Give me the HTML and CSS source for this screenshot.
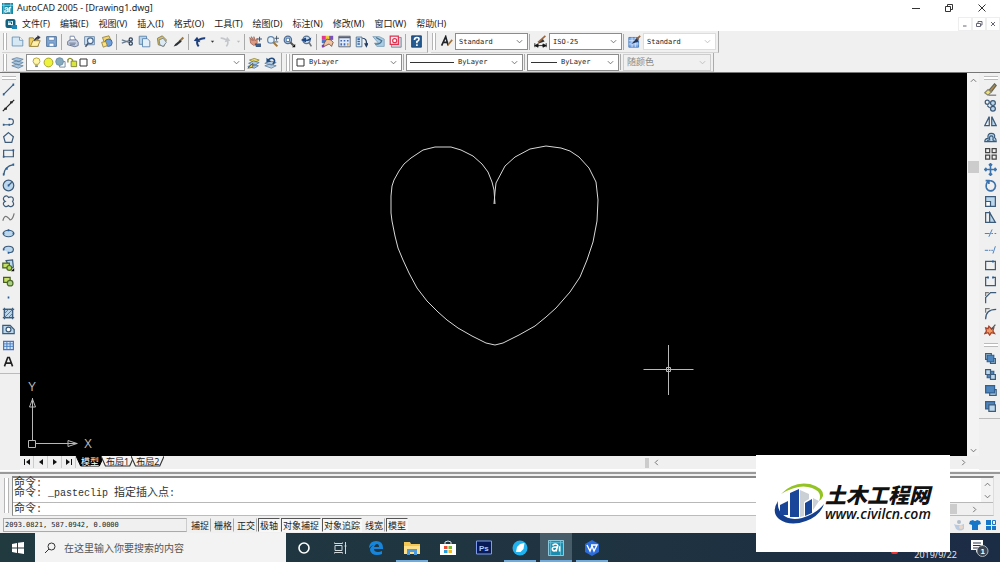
FILE: index.html
```
<!DOCTYPE html>
<html lang="zh-CN">
<head>
<meta charset="utf-8">
<title>AutoCAD 2005 - [Drawing1.dwg]</title>
<link rel="stylesheet" href="styles.css">
</head>
<body>
<div class="app">
  <header class="titlebar">
    <svg class="appicon" viewBox="0 0 12 12"><rect width="12" height="12" fill="#1289a7"/><path d="M0 2.500h12M9.500 0v12M2 0v12" stroke="#9ed8e6" stroke-width=".8"/><path d="M3 6q2-2 3.500 0V10M6.500 7.500Q3 7 3 9t3.500 0M8 10V5h2" stroke="#fff" fill="none" stroke-width="1.200"/></svg>
    <h1 class="title">AutoCAD 2005 - [Drawing1.dwg]</h1>
    <div class="winbtns">
      <button aria-label="最小化"><svg viewBox="0 0 10 10"><path d="M1 5.500h8"/></svg></button>
      <button aria-label="还原"><svg viewBox="0 0 10 10"><path d="M1.500 3.500h5v5h-5zM3.500 3.500v-2h5v5h-2"/></svg></button>
      <button aria-label="关闭"><svg viewBox="0 0 10 10"><path d="M1.500 1.500l7 7M8.500 1.500l-7 7"/></svg></button>
    </div>
  </header>
  <nav class="menubar">
    <svg class="docicon" viewBox="0 0 12 12"><rect x=".5" y="1" width="10" height="9" rx="2" fill="#14617f"/><path d="M3 3h5v4H3z" fill="#d9f1f8"/><path d="M3.500 4h3v2" stroke="#14617f" fill="none"/><path d="M6 7h6v4H7z" fill="#1c86b8"/></svg>
    <button>文件(F)</button><button>编辑(E)</button><button>视图(V)</button><button>插入(I)</button><button>格式(O)</button><button>工具(T)</button><button>绘图(D)</button><button>标注(N)</button><button>修改(M)</button><button>窗口(W)</button><button>帮助(H)</button>
    <div class="docbtns">
      <button aria-label="最小化文档"><svg viewBox="0 0 8 8"><path d="M2 6h3.500"/></svg></button>
      <button aria-label="还原文档"><svg viewBox="0 0 8 8"><path d="M1.500 3.500h4v3h-4zM3 3V1.500h4V5H6"/></svg></button>
      <button aria-label="关闭文档"><svg viewBox="0 0 8 8"><path d="M2 2l4 4M6 2L2 6"/></svg></button>
    </div>
  </nav>

  <div class="toolrow">
    <div class="toolbar">
      <i class="grip"></i>
      <button class="tb" aria-label="新建"><svg viewBox="0 0 16 16"><path d="M1.500 2.500h9l4 4v7h-13z" fill="#d7e8f5" stroke="#5f8bb0"/><path d="M10.500 2.500v4h4" fill="#fff" stroke="#5f8bb0"/></svg></button>
      <button class="tb" aria-label="打开"><svg viewBox="0 0 16 16"><path d="M1.500 14V3.500h5l1 2h5V14z" fill="#f1cf67" stroke="#8f7a35"/><path d="M3 14l3-7h9l-3 7z" fill="#fff0a8" stroke="#8f7a35"/><path d="M8 7q1-5 5-4M12 1l3 2-3 2z" fill="#334" stroke="#334"/></svg></button>
      <button class="tb" aria-label="保存"><svg viewBox="0 0 16 16"><path d="M2 2h12v12H2z" fill="#7fa8d5" stroke="#3b628f"/><path d="M4.500 2.500h7v4h-7zM5 10h6v4H5z" fill="#fff" stroke="#5c83b0"/></svg></button>
      <i class="sep"></i>
      <button class="tb" aria-label="打印"><svg viewBox="0 0 16 16"><path d="M5 7V1.500h5L12 7" fill="#fff" stroke="#66799a"/><path d="M2 8l3-2h8l2 3v4l-4 1.500L2 12z" fill="#c4cfdf" stroke="#59698a"/><path d="M4 10h8M5 12h6" stroke="#59698a"/></svg></button>
      <button class="tb" aria-label="打印预览"><svg viewBox="0 0 16 16"><path d="M2 2h12v10H2z" fill="#cfe1f0" stroke="#5f7f9f"/><circle cx="9" cy="7" r="3.500" fill="#eef7ff" stroke="#4a6b94" stroke-width="1.500"/><path d="M6.500 10L3 14.500" stroke="#4a5568" stroke-width="2"/></svg></button>
      <button class="tb" aria-label="发布"><svg viewBox="0 0 16 16"><path d="M3 3l8-2 3 7-8 3z" fill="#f4d66c" stroke="#8f7a35"/><circle cx="10.500" cy="9.500" r="4.500" fill="#6f9fd8" stroke="#365f9a"/><path d="M2 9l5-1 2 5-5 2z" fill="#ffe27c" stroke="#8f7a35"/></svg></button>
      <i class="sep"></i>
      <button class="tb" aria-label="剪切"><svg viewBox="0 0 16 16"><path d="M1 6l9 3M1 10l9-3" stroke="#6b7b8e" stroke-width="1.500"/><circle cx="12" cy="5.500" r="2" fill="none" stroke="#29405c" stroke-width="1.500"/><circle cx="12" cy="10.500" r="2" fill="none" stroke="#29405c" stroke-width="1.500"/></svg></button>
      <button class="tb" aria-label="复制"><svg viewBox="0 0 16 16"><path d="M1.500 1.500h9v10h-9z" fill="#b9d3ea" stroke="#4d7ba6"/><path d="M5.500 4.500h6l3 3v7h-9z" fill="#e3f0fa" stroke="#4d7ba6"/></svg></button>
      <button class="tb" aria-label="粘贴"><svg viewBox="0 0 16 16"><path d="M3 4l6-3 5 5-3 8-7-2z" fill="#d6c16b" stroke="#7a7350"/><path d="M5 6l5-2 4 5-4 5-4-2z" fill="#dce8f2" stroke="#6b7c8b"/></svg></button>
      <button class="tb" aria-label="特性匹配"><svg viewBox="0 0 16 16"><path d="M9 8l5-5" stroke="#a07a3c" stroke-width="2.500"/><path d="M10 6L4 11l-2 3 4-1 6-5z" fill="#2b3038"/></svg></button>
      <i class="sep"></i>
      <button class="tb" aria-label="放弃"><svg viewBox="0 0 16 16"><path d="M7 14Q3 9 7 6q4-2.500 8-2" fill="none" stroke="#1d3e7c" stroke-width="2.500"/><path d="M1 7l4-5 4 7z" fill="#1d3e7c"/></svg></button>
      <button class="drop" aria-label="放弃列表"><svg viewBox="0 0 6 6"><path d="M1 2h4L3 4.500z"/></svg></button>
      <button class="tb" aria-label="重做"><svg viewBox="0 0 16 16"><path d="M9 14q4-5 0-8-4-2.500-7-2" fill="none" stroke="#c3c6cb" stroke-width="2"/><path d="M14 7l-4-5-3 7z" fill="#c3c6cb"/></svg></button>
      <button class="drop off" aria-label="重做列表"><svg viewBox="0 0 6 6"><path d="M1 2h4L3 4.500z"/></svg></button>
      <i class="sep"></i>
      <button class="tb" aria-label="实时平移"><svg viewBox="0 0 16 16"><path d="M1 3l3 4-1-5 3 5V2l2 5 2-3v6l-4 3-4-3z" fill="#df9a83" stroke="#8f5648" stroke-width=".8"/><path d="M8 11h6v3H9zM13 2v6M10 5h6" fill="#44638f" stroke="#39547e" stroke-width="1.300"/></svg></button>
      <button class="tb" aria-label="实时缩放"><svg viewBox="0 0 16 16"><circle cx="6" cy="6" r="4" fill="#e5f1fb" stroke="#6386ac" stroke-width="1.500"/><path d="M9 9l5 5" stroke="#a47a3a" stroke-width="2.500"/><path d="M13 1v6M10.500 4H16M10.500 8.500H15" stroke="#345"/></svg></button>
      <button class="tb" aria-label="窗口缩放"><svg viewBox="0 0 16 16"><circle cx="6" cy="6" r="4.500" fill="#aac8e6" stroke="#526b92" stroke-width="1.500"/><path d="M4 4h4v4H4z" fill="#fff" stroke="#369"/><path d="M9 9l4 4" stroke="#555" stroke-width="2.500"/><path d="M15 11v4h-4z" fill="#111"/></svg></button>
      <button class="tb" aria-label="缩放上一个"><svg viewBox="0 0 16 16"><circle cx="8" cy="6" r="4.500" fill="#c8ddef" stroke="#5b7592" stroke-width="1.500"/><path d="M11 9l3 5" stroke="#6c7178" stroke-width="2"/><path d="M1 6l6-3 1 3 6-3-1 3q-3 2-5 1L7 9z" fill="#1c4584"/></svg></button>
      <i class="sep"></i>
      <button class="tb" aria-label="特性"><svg viewBox="0 0 16 16"><path d="M1 1h5v5H1z" fill="#e1388f"/><path d="M6 1h4v5H6z" fill="#f1ca37"/><path d="M10 1h5v5h-5z" fill="#7952b8"/><path d="M1 6h5v4H1z" fill="#4b79c9"/><path d="M7 5l5 1 3 3-2 5-3-3-4 2-4 2 2-5z" fill="#f2c3a0" stroke="#65463f"/><path d="M1 12h3v3H1z" fill="#7d3cb0"/></svg></button>
      <button class="tb" aria-label="设计中心"><svg viewBox="0 0 16 16"><path d="M1 1.500h14v13H1z" fill="#dfeafb" stroke="#4b5260"/><path d="M1 2h14v2H1z" fill="#596273"/><path d="M3 6h2v2H3zM7 6h2v2H7zM11 6h2v2h-2zM3 10h2v3H3zM7 10h2v3H7z" fill="#3e68b7"/><path d="M11 10h2v3h-2z" fill="#db963d"/></svg></button>
      <button class="tb" aria-label="工具选项板"><svg viewBox="0 0 16 16"><path d="M1.500 2.500h7v12h-7z" fill="#dcebf8" stroke="#406288"/><path d="M3 5h3M3 8h3M3 11h3" stroke="#2a65b8" stroke-width="2"/><path d="M9 4q6 0 5 8M12 10l2 4 2-4" fill="none" stroke="#263f62" stroke-width="1.500"/></svg></button>
      <button class="tb" aria-label="图纸集管理器"><svg viewBox="0 0 16 16"><path d="M1 2h8l6 3v9H6l-3-4h5z" fill="#a9cde4" stroke="#7b9eb6"/><path d="M4 11q6 1 8-4l-7-4" fill="none" stroke="#49738e" stroke-width="1.500"/></svg></button>
      <button class="tb" aria-label="标记集管理器"><svg viewBox="0 0 16 16"><path d="M3 3h12v12H3z" fill="#ced4de" stroke="#717b8d"/><path d="M1.500 1.500h10v10h-10z" fill="#fff1f1" stroke="#dc3350" stroke-width="1.500"/><circle cx="7" cy="7" r="2.500" fill="#fff" stroke="#dc3350" stroke-width="1.500"/></svg></button>
      <i class="sep"></i>
      <button class="tb" aria-label="帮助"><svg viewBox="0 0 16 16"><path d="M2 1h12v14H2z" fill="#245b93" stroke="#16385f"/><path d="M5.500 6q0-3 3-3 3 0 2.500 2.500Q11 7 8.500 8v2M8.500 11.500v2" fill="none" stroke="#fff" stroke-width="2"/></svg></button>
    </div>
    <div class="toolbar">
      <i class="grip"></i>
      <button class="tb" aria-label="文字样式"><svg viewBox="0 0 16 16"><path d="M2 13L7 2l3 11M4 9h6" fill="none" stroke="#20242b" stroke-width="2"/><path d="M10 12l5-6" stroke="#a2733a" stroke-width="2"/></svg></button>
      <label class="combo w73"><select aria-label="文字样式"><option>Standard</option></select><svg class="chev" viewBox="0 0 8 8"><path d="M1 2.500l3 3 3-3"/></svg></label>
      <i class="sep"></i>
      <button class="tb" aria-label="标注样式"><svg viewBox="0 0 16 16"><path d="M1 13h14M1 10v5M15 10v5M1 13l4-2v4zM15 13l-4-2v4z" fill="#111" stroke="#111"/><path d="M5 9l9-8" stroke="#9a643a" stroke-width="2"/><path d="M4 11l7-6 2 3z" fill="#333"/></svg></button>
      <label class="combo w73"><select aria-label="标注样式"><option>ISO-25</option></select><svg class="chev" viewBox="0 0 8 8"><path d="M1 2.500l3 3 3-3"/></svg></label>
      <i class="sep"></i>
      <button class="tb" aria-label="表格样式"><svg viewBox="0 0 16 16"><path d="M1 3h12v12H1z" fill="#83afea" stroke="#3e71b4"/><path d="M1 7h12M1 11h12M5 3v12M9 3v12" stroke="#d9e8fc"/><path d="M9 7l6-6" stroke="#9a643a" stroke-width="2"/><path d="M4 11l7-7 2 4z" fill="#253553"/></svg></button>
      <label class="combo w73 faint"><select aria-label="表格样式"><option>Standard</option></select><svg class="chev" viewBox="0 0 8 8"><path d="M1 2.500l3 3 3-3"/></svg></label>
    </div>
  </div>

  <div class="toolrow second">
    <div class="toolbar">
      <i class="grip"></i>
      <button class="tb" aria-label="图层特性管理器"><svg viewBox="0 0 16 16"><path d="M1 4l6-2 8 2-6 3zM1 8l6-2 8 2-6 3zM1 12l6-2 8 2-6 3z" fill="#a9c6df" stroke="#64829f"/></svg></button>
      <label class="combo layer">
        <svg class="li" viewBox="0 0 12 12"><path d="M4 8Q1 5 3 2q3-2 6 0 2 3-1 6z" fill="#fff6a8" stroke="#b0a136"/><path d="M4.500 9h3v2h-3z" fill="#77838e"/></svg>
        <svg class="li" viewBox="0 0 12 12"><circle cx="6" cy="6" r="4.800" fill="#edf23b" stroke="#a09b2e"/></svg>
        <svg class="li" viewBox="0 0 12 12"><path d="M5 5h6v6H5z" fill="#fff" stroke="#70869a"/><circle cx="5" cy="5" r="4.200" fill="#86a9bd" stroke="#6c91a7"/></svg>
        <svg class="li" viewBox="0 0 12 12"><path d="M1 6V3q2-3 5 0v3" fill="none" stroke="#8d912b" stroke-width="1.500"/><path d="M4.500 4.500h6v6h-6z" fill="#d9e640" stroke="#7b8430"/></svg>
        <svg class="li sq" viewBox="0 0 9 9"><path d="M1 1h7v7H1z" fill="#fff" stroke="#333"/></svg>
        <select aria-label="图层"><option>0</option></select><svg class="chev" viewBox="0 0 8 8"><path d="M1 2.500l3 3 3-3"/></svg></label>
      <button class="tb" aria-label="置为当前"><svg viewBox="0 0 16 16"><path d="M3 5l6-2 6 2-6 3z" fill="#f0dc65" stroke="#8b8132"/><path d="M2 9l6-3 7 2-6 4zM1 13l6-3 7 2-5 3z" fill="#acc7de" stroke="#50759a"/><path d="M1 15l6-6v5z" fill="#e5d137" stroke="#555"/></svg></button>
      <button class="tb" aria-label="上一个图层"><svg viewBox="0 0 16 16"><path d="M1 9l6-3 8 2-6 3zM1 12l6-2 8 2-6 3z" fill="#b6cde1" stroke="#5f7f9e"/><path d="M11 10q4-5 0-7-3-1-6 2" fill="none" stroke="#214c82" stroke-width="2"/><path d="M3 8V2l6 5z" fill="#214c82"/></svg></button>
    </div>
    <div class="toolbar">
      <i class="grip"></i>
      <label class="combo color"><svg class="li sq" viewBox="0 0 9 9"><path d="M1 1h7v7H1z" fill="#fff" stroke="#333"/></svg><select aria-label="颜色"><option>ByLayer</option></select><svg class="chev" viewBox="0 0 8 8"><path d="M1 2.500l3 3 3-3"/></svg></label>
      <i class="sep"></i>
      <label class="combo ltype"><i class="line long"></i><select aria-label="线型"><option>ByLayer</option></select><svg class="chev" viewBox="0 0 8 8"><path d="M1 2.500l3 3 3-3"/></svg></label>
      <i class="sep"></i>
      <label class="combo lweight"><i class="line"></i><select aria-label="线宽"><option>ByLayer</option></select><svg class="chev" viewBox="0 0 8 8"><path d="M1 2.500l3 3 3-3"/></svg></label>
      <i class="sep"></i>
      <label class="combo plot disabled"><select aria-label="打印样式" disabled><option>随颜色</option></select><svg class="chev" viewBox="0 0 8 8"><path d="M1 2.500l3 3 3-3"/></svg></label>
    </div>
  </div>

  <main class="work">
    <aside class="side left">
      <i class="hgrip"></i>
      <button aria-label="直线"><svg viewBox="0 0 16 16"><path d="M2 14L14 2"/><path class="d" d="M1 14h2M13 2h2"/></svg></button>
      <button aria-label="构造线"><svg viewBox="0 0 16 16"><path d="M1 15L15 1" style="stroke:#222"/><path class="d" d="M3 12h3M10 4h3" style="stroke:#222"/></svg></button>
      <button aria-label="多段线"><svg viewBox="0 0 16 16"><path d="M2 12h8q4 0 4-4t-5-3"/><path class="d" d="M1 12h2M8 12h2M8 5h2"/></svg></button>
      <button aria-label="正多边形"><svg viewBox="0 0 16 16"><path d="M8 2l6 5-2 7H4L2 7z"/></svg></button>
      <button aria-label="矩形"><svg viewBox="0 0 16 16"><path d="M2 4h12v8H2z"/><path class="d" d="M1 12h2M13 4h2"/></svg></button>
      <button aria-label="圆弧"><svg viewBox="0 0 16 16"><path d="M2 15Q3 4 14 2"/><path class="d" d="M1 14h2M5 7h2M13 2h2"/></svg></button>
      <button aria-label="圆"><svg viewBox="0 0 16 16"><circle cx="8" cy="8" r="6.500" class="f"/><path d="M8 8l4-4"/><path class="d" d="M7 8h2"/></svg></button>
      <button aria-label="修订云线"><svg viewBox="0 0 16 16"><path d="M4 8Q0 5 3 2q3-2 5 1 5-2 6 2 0 2-1 3 3 4-1 6-3 1-4-1-4 3-6-1-1-3 2-4z"/></svg></button>
      <button aria-label="样条曲线"><svg viewBox="0 0 16 16"><path class="g" d="M1 12Q3 5 6 7t4 4q3 0 5-8"/></svg></button>
      <button aria-label="椭圆"><svg viewBox="0 0 16 16"><ellipse cx="8" cy="8" rx="6.500" ry="4" class="f"/><path class="d" d="M1 8h2M13 8h2M7 4h2"/></svg></button>
      <button aria-label="椭圆弧"><svg viewBox="0 0 16 16"><path class="f" d="M2 8q0-4 6-4t6 4q0 4-6 4"/><path class="d" d="M1 8h2M7 12h2"/></svg></button>
      <button aria-label="插入块"><svg viewBox="0 0 16 16"><path d="M5 2l8-1 1 9-4 2z" class="f"/><path d="M1 5h8v6H1z" fill="#c5df68" stroke="#465f20"/><circle cx="9" cy="11" r="3" fill="#b1db54" stroke="#4c6928"/><path d="M15 11v4h-4z" fill="#111" stroke="none"/></svg></button>
      <button aria-label="创建块"><svg viewBox="0 0 16 16"><path d="M2 3h8v6H2z" fill="#c5df68" stroke="#465f20"/><circle cx="10" cy="10" r="3.500" fill="#a9cf82" stroke="#4c6928"/></svg></button>
      <button aria-label="点"><svg viewBox="0 0 16 16"><path class="d" d="M7 8h2"/></svg></button>
      <button aria-label="图案填充"><svg viewBox="0 0 16 16"><path class="f" d="M3 3h10v10H3z"/><path d="M1 3h14M1 13h14M3 1v14M13 1v14"/><path class="b" d="M3 8l5-5M3 13L13 3M8 13l5-5"/></svg></button>
      <button aria-label="面域"><svg viewBox="0 0 16 16"><path class="f" d="M1 3h9l5 5v5H1z"/><circle cx="8" cy="8" r="3" fill="#fff"/></svg></button>
      <button aria-label="表格"><svg viewBox="0 0 16 16"><path d="M2 3h12v10H2z" fill="#d8e8ff" stroke="#4d73ba"/><path class="b" d="M2 6h12M2 9h12M6 3v10M10 3v10"/></svg></button>
      <button aria-label="多行文字"><svg viewBox="0 0 16 16"><path d="M3 14L7 3h2l4 11M5 10h6" style="stroke:#222;stroke-width:2"/></svg></button>
    </aside>

    <section class="center">
      <div class="view">
        <svg class="drawing" viewBox="0 -1 947 383" role="img" aria-label="绘图区">
          <path class="ent" d="M475 130L474 116 472 108 468 98 462 90 453 82 441 76 431 73 415 73 403 76 391 84 384 90 379 97 374 106 372 112 371 122 371 139 372 147 375 162 378 174 383 186 389 199 397 214 407 227 418 238 427 246 438 254 452 262 466 269 475 271 483 269 499 261 515 252 526 243 536 234 550 218 560 203 567 186 573 168 577 147 578 126 576 108 569 94 559 83 550 77 541 74 526 72 510 75 495 83 485 92 476 109 475 118 474 130"/>
          <path class="cross" d="M623.500 295.500h50M648.500 271v50M646.500 293.500h4v4h-4z"/>
          <path class="ucs" d="M8.500 366.500h7v7h-7zM12.500 366v-42M15.500 369.500h42M12.500 325l-3 8h6zM57 369.500l-9-3v6z"/>
          <text x="8" y="317" class="axis">Y</text>
          <text x="64" y="374" class="axis">X</text>
        </svg>
        <div class="vscroll"><svg class="chev" viewBox="0 0 8 8"><path d="M1 5.500l3-3 3 3"/></svg><i class="thumb"></i><svg class="chev end" viewBox="0 0 8 8"><path d="M1 2.500l3 3 3-3"/></svg></div>
      </div>
      <div class="tabs">
        <button class="nav" aria-label="第一个"><svg viewBox="0 0 8 8"><path d="M1 1h1v6H1zM7 1v6L3 4z"/></svg></button>
        <button class="nav" aria-label="上一个"><svg viewBox="0 0 8 8"><path d="M6 1v6L2 4z"/></svg></button>
        <button class="nav" aria-label="下一个"><svg viewBox="0 0 8 8"><path d="M2 1v6l4-3z"/></svg></button>
        <button class="nav" aria-label="最后一个"><svg viewBox="0 0 8 8"><path d="M6 1h1v6H6zM1 1v6l4-3z"/></svg></button>
        <button class="tab on"><svg viewBox="0 0 30 11" preserveAspectRatio="none"><path d="M0 0l5 10h20l5-10z"/></svg><span>模型</span></button>
        <button class="tab"><svg viewBox="0 0 30 11" preserveAspectRatio="none"><path d="M0 0l4 10h22l4-10"/></svg><span>布局1</span></button>
        <button class="tab"><svg viewBox="0 0 30 11" preserveAspectRatio="none"><path d="M0 0l4 10h22l4-10"/></svg><span>布局2</span></button>
        <div class="hscroll"><i class="split"></i><svg class="chev" viewBox="0 0 8 8"><path d="M5.500 1l-3 3 3 3"/></svg><svg class="chev end" viewBox="0 0 8 8"><path d="M2.500 1l3 3-3 3"/></svg></div>
      </div>
    </section>

    <aside class="side right">
      <i class="hgrip"></i>
      <button aria-label="删除"><svg viewBox="0 0 16 16"><path d="M6 9l7-8 2 2-6 8z" fill="#b98a4a" stroke="#665"/><path d="M1 12l4-4 4 3-4 4z" fill="#f0e27a" stroke="#887"/><path class="g" d="M6 15h9"/></svg></button>
      <button aria-label="复制对象"><svg viewBox="0 0 16 16"><circle cx="4" cy="4" r="2.500"/><circle cx="11" cy="5" r="3" class="f"/><path d="M4 8l3 3"/><circle cx="11" cy="12" r="3" class="f"/></svg></button>
      <button aria-label="镜像"><svg viewBox="0 0 16 16"><path d="M6.500 2v11H1z"/><path class="f" d="M9.500 2v11H15z"/></svg></button>
      <button aria-label="偏移"><svg viewBox="0 0 16 16"><path class="f" d="M1 13q0-4 4-4-1-6 4-6t4 5q2 1 2 5z"/><path d="M4 12q1-1 3-1-1-5 2-5t2 5l2 1"/></svg></button>
      <button aria-label="阵列"><svg viewBox="0 0 16 16"><path d="M2 2h5v5H2zM10 2h5v5h-5zM2 10h5v5H2zM10 10h5v5h-5z" style="stroke:#444"/></svg></button>
      <button aria-label="移动"><svg viewBox="0 0 16 16"><path class="m" d="M8 1v14M1 8h14"/><path class="m" d="M6 3l2-2 2 2M6 13l2 2 2-2M3 6L1 8l2 2M13 6l2 2-2 2"/></svg></button>
      <button aria-label="旋转"><svg viewBox="0 0 16 16"><path class="m" d="M4 4q5-4 9 1 3 5-2 9-6 2-8-3-1-4 1-7M2 2h4v4"/></svg></button>
      <button aria-label="缩放"><svg viewBox="0 0 16 16"><path class="f" d="M2 2h12v12H2z"/><path d="M2 8h6v6H2z" fill="#fff"/></svg></button>
      <button aria-label="拉伸"><svg viewBox="0 0 16 16"><path d="M2 2h5v12H2z"/><path class="f" d="M7 2l7 12H7z"/></svg></button>
      <button aria-label="修剪"><svg viewBox="0 0 16 16"><path class="b" d="M1 8h6M9 8h2M13 8h2M6 12l4-9"/></svg></button>
      <button aria-label="延伸"><svg viewBox="0 0 16 16"><path class="b" d="M1 9h4M6 9h2M9 9h2M11 13l3-9"/></svg></button>
      <button aria-label="打断于点"><svg viewBox="0 0 16 16"><path d="M2 3h12v10H2z"/><path class="d" d="M10 3h2"/></svg></button>
      <button aria-label="打断"><svg viewBox="0 0 16 16"><path d="M5 3H2v10h12V3h-3"/><path class="d" d="M4 3h2M10 3h2"/></svg></button>
      <button aria-label="倒角"><svg viewBox="0 0 16 16"><path d="M2 15V8l6-6h7"/><path class="g" d="M2 6V2h4"/></svg></button>
      <button aria-label="圆角"><svg viewBox="0 0 16 16"><path d="M2 15Q2 3 15 3"/><path class="g" d="M2 7V2h5"/></svg></button>
      <button aria-label="分解"><svg viewBox="0 0 16 16"><path d="M2 6l3 1 1-3 3 3 3-1-1 4 2 3-4-1-2 3-2-3-4 1 2-3z" fill="#ee9a60" stroke="#a5412c"/><path d="M9 8l5-6" style="stroke:#555"/></svg></button>
      <i class="hgrip again"></i>
      <button aria-label="前置"><svg viewBox="0 0 16 16"><path class="f" d="M2 2h7v7H2zM8 8h6v6H8z"/><path class="s" d="M4 4h8v8H4z"/></svg></button>
      <button aria-label="后置"><svg viewBox="0 0 16 16"><path class="s" d="M4 4h8v8H4z"/><path class="f" d="M2 2h6v6H2zM8 8h6v6H8z"/></svg></button>
      <button aria-label="置于对象之上"><svg viewBox="0 0 16 16"><path class="f" d="M7 7h8v7H7z"/><path class="s" d="M2 2h11v9H2z"/></svg></button>
      <button aria-label="置于对象之下"><svg viewBox="0 0 16 16"><path class="s" d="M2 2h11v9H2z"/><path class="f" d="M6 6h8v8H6z"/></svg></button>
    </aside>
  </main>

  <section class="command">
    <i class="grip"></i>
    <div class="cmdpanel">
      <div class="history">
        <div class="log"><p><span>命令</span>:</p><p><span>命令</span>: _pasteclip <span>指定插入点</span>:</p></div>
        <div class="logscroll"><svg class="chev" viewBox="0 0 8 8"><path d="M1 5.500l3-3 3 3"/></svg><svg class="chev" viewBox="0 0 8 8"><path d="M1 2.500l3 3 3-3"/></svg></div>
      </div>
      <div class="entry"><label for="cmd"><span>命令</span>:</label><input id="cmd" type="text"><div class="entryscroll"><i class="thumb"></i><svg class="chev" viewBox="0 0 8 8"><path d="M2.500 1l3 3-3 3"/></svg></div></div>
    </div>
  </section>

  <footer class="status">
    <output class="coords">2093.0821, 587.0942, 0.0000</output>
    <button>捕捉</button><button>栅格</button><button>正交</button><button class="on">极轴</button><button class="on">对象捕捉</button><button class="on">对象追踪</button><button>线宽</button><button class="on">模型</button>
    <div class="tray">
      <svg viewBox="0 0 12 12"><circle cx="6" cy="3" r="2" fill="#b2bfca"/><path d="M1 5q2 1 4 1h3l3-1v5q-4 3-8 0z" fill="#b8cbe0"/><circle cx="8" cy="8" r="2" fill="#ecd7c7"/></svg>
      <svg viewBox="0 0 12 12"><path d="M1 2l3-1q2 2 4 0l3 1 1 3-3 1v5H3V6L0 5z" fill="#1876c9"/></svg>
      <svg viewBox="0 0 12 12"><path d="M1 1h5v5H1zM1 7h5v4H1zM7 7h4v4H7z" fill="#1876c9"/><path d="M7.500 1.500h3v4h-3z" fill="none" stroke="#1876c9"/></svg>
    </div>
  </footer>

  <footer class="taskbar">
    <button class="start" aria-label="开始"><svg viewBox="0 0 12 12"><path d="M0 2l5-1v4.500H0zM6 .8L12 0v5.500H6zM0 6.500h5V11l-5-1zM6 6.500h6V12l-6-1z" fill="#fff"/></svg></button>
    <label class="search"><svg viewBox="0 0 12 12"><circle cx="7.500" cy="4.500" r="3.500"/><path d="M5 7l-4 4"/></svg><input type="search" placeholder="在这里输入你要搜索的内容" aria-label="搜索"></label>
    <div class="apps">
      <button aria-label="Cortana"><svg viewBox="0 0 16 16"><circle cx="8" cy="8" r="5" fill="none" stroke="#fff" stroke-width="1.600"/></svg></button>
      <button aria-label="任务视图"><svg viewBox="0 0 16 16" fill="none" stroke="#d2dade"><path d="M3 5.500h7v5H3zM2.500 2.500v1h8v-1M2.500 13.500v-1h8v1M13.500 2v12M12.500 6h2"/></svg></button>
      <button aria-label="Edge"><svg viewBox="0 0 16 16"><path d="M1 7Q2 1 8 1q7 0 7 7v1H6q0 3 4 3 2 0 4-1v3q-2 1-5 1-6 0-7-5 0-3 4-5-2 0-5 3zM6 7h5q0-3-2-3T6 7z" fill="#1686dc" fill-rule="evenodd"/></svg></button>
      <button class="run" aria-label="文件资源管理器"><svg viewBox="0 0 16 16"><path d="M0 2h6l1 2h9v10H0z" fill="#f4c653"/><path d="M0 6h16v8H0z" fill="#ffe08a"/><path d="M3 15V9h10v6h-3v-3H6v3z" fill="#4d9add"/></svg></button>
      <button aria-label="应用商店"><svg viewBox="0 0 16 16"><path d="M5 4V2q3-2 6 0v2" fill="none" stroke="#dce2e5"/><path d="M0 4h16v11H0z" fill="#fff"/><path d="M4 6h3.500v3H4z" fill="#e74b32"/><path d="M8.500 6H12v3H8.500z" fill="#77b82b"/><path d="M4 10h3.500v3H4z" fill="#24a0df"/><path d="M8.500 10H12v3H8.500z" fill="#f4b91c"/></svg></button>
      <button aria-label="Photoshop"><svg viewBox="0 0 16 16"><path d="M.5 1h15v13H.5z" fill="#071b58" stroke="#7f9cf0"/><text x="3" y="11" class="ps">Ps</text></svg></button>
      <button class="run" aria-label="浏览器"><svg viewBox="0 0 16 16"><circle cx="8" cy="8" r="7.500" fill="#20b1ef"/><path d="M12.500 3l-1 6-3 3H4l1-5 3-3z" fill="#fff"/></svg></button>
      <button class="run active" aria-label="AutoCAD"><svg viewBox="0 0 18 18"><path d="M.5.500h17v17H.5z" fill="#1c8cae" stroke="#9ed8ea"/><path d="M1 3h16M14 1v16M3 1v16" stroke="#65bfd8"/><path d="M5 6q4-3 6 0l-2 7M10 8Q4 7 5 11q2 3 5-1M13 7v6" fill="none" stroke="#fff" stroke-width="1.800"/></svg></button>
      <button class="run" aria-label="WPS"><svg viewBox="0 0 16 16"><path d="M8 0l7 4v8l-7 4-7-4V4z" fill="#2c6ddb"/><path d="M3 5l3 6 2-5 2 5 3-6H7" fill="none" stroke="#fff" stroke-width="1.400"/></svg></button>
    </div>
    <div class="systray">
      <i class="reddot"></i>
      <time>2019/9/22</time>
      <button class="notify" aria-label="通知"><svg viewBox="0 0 20 18"><path d="M2 1h12v10H9l-2 3v-3H2z" fill="#fff"/><path d="M4 4h8M4 6.500h8M4 9h5" stroke="#24364a"/><circle cx="13.500" cy="12" r="5.500" fill="#3b4652" stroke="#aab3bb"/><text x="11.500" y="15" class="count">1</text></svg></button>
    </div>
  </footer>

  <div class="brand">
    <svg class="brandmark" viewBox="0 0 52 42"><path d="M8 11Q20-2 37 1q14 4 13 12-1 3-4 5 4-9-7-13Q26 0 8 11z" fill="#94c423"/><path d="M5 18Q-2 29 6 36q11 8 27 2 14-5 18-17-8 10-22 14-13 3-20-4-5-5-4-13z" fill="#143f8f"/><path d="M7 22l8-4v14H7zM17 10l9-4v28h-9zM32 20l7-4v14l-7 3z" fill="#194698"/><path d="M27 7l9 4v5l-5 3v14l-4 1zM40 15l6 3-6 9z" fill="#cbd0d7"/></svg>
    <div class="brandtext"><strong>土木工程网</strong><span>www.civilcn.com</span></div>
  </div>
</div>
</body>
</html>
```
FILE: styles.css
```
* { box-sizing: border-box; }
body { margin: 0; background: #f0f0f0; color: #222; font: 9px/12px "Noto Sans", "Noto Sans CJK SC", sans-serif; }
button { margin: 0; padding: 0; border: 0; background: none; color: inherit; font: inherit; }
svg { display: block; flex: none; }
p { margin: 0; }
.app { position: relative; display: flex; flex-direction: column; min-height: 100vh; }

.titlebar { display: flex; align-items: center; height: 16px; padding-left: 2px; background: #fff; }
.appicon { width: 11px; height: 11px; }
.title { margin: 0 auto 0 4px; font: 9px/14px "Noto Sans", sans-serif; color: #222; }
.winbtns { display: flex; padding-right: 2px; }
.winbtns button { display: grid; place-items: center; width: 33px; height: 16px; }
.winbtns svg { width: 10px; height: 10px; fill: none; stroke: #333; }

.menubar { display: flex; align-items: center; gap: 10px; height: 15px; padding-left: 5px; background: #fff; }
.menubar > button { white-space: nowrap; }
.docicon { width: 12px; height: 12px; margin-right: -5px; }
.docbtns { display: flex; margin-left: auto; }
.docbtns button { display: grid; place-items: center; width: 14px; height: 14px; border: 1px solid #eee; }
.docbtns svg { width: 8px; height: 8px; fill: none; stroke: #667; }

.toolrow { display: flex; gap: 3px; height: 22px; padding-left: 2px; }
.toolrow.second { height: 20px; border-bottom: 1px solid #777; }
.toolbar { display: flex; align-items: center; padding-right: 2px; border-right: 1px solid #aaa; border-bottom: 1px solid #d4d4d4; }
.grip { width: 4px; height: 17px; margin: 0 2px 0 1px; border: 1px solid #b5b5b5; border-top: 0; border-bottom: 0; background: #fff; flex: none; }
.sep { width: 1px; height: 16px; margin: 0 2px 0 1px; background: #aaa; flex: none; }
.tb { display: grid; place-items: center; width: 17px; height: 18px; }
.tb svg { width: 13px; height: 13px; fill: none; }
.drop { display: grid; place-items: center; width: 9px; height: 18px; }
.drop svg { width: 5px; height: 5px; fill: #333; }
.drop.off svg { fill: #bbb; }

.combo { display: flex; align-items: center; height: 17px; padding: 0 4px 0 3px; border: 1px solid #8c8c8c; background: #fff; }
.combo select { flex: 1; min-width: 0; height: 14px; padding: 0; border: 0; background: none; color: #222; font: 7px/14px "DejaVu Sans Mono", "Noto Sans CJK SC", monospace; appearance: none; opacity: 1; }
.chev { width: 7px; height: 7px; fill: none; stroke: #666; }
.w73 { width: 73px; }
.faint { border-color: #ddd; }
.faint .chev, .disabled .chev { stroke: #bbb; }
.layer { width: 219px; padding-left: 4px; }
.color { width: 110px; }
.ltype { width: 117px; }
.lweight { width: 92px; }
.plot { width: 88px; }
.disabled { border-color: #ccc; background: #f0f0f0; }
.combo.disabled select { color: #888; font-size: 9px; }
.li { width: 11px; height: 11px; margin-right: 1px; }
.li.sq { width: 9px; height: 9px; margin-right: 4px; }
.line { width: 26px; height: 1px; margin-right: 4px; background: #333; }
.line.long { width: 44px; }

.work { flex: 1; display: flex; min-height: 0; }
.side { display: flex; flex-direction: column; align-items: center; align-self: flex-start; padding: 2px 0 4px; border-bottom: 1px solid #bbb; }
.side.left { width: 20px; padding-right: 3px; }
.side.right { width: 21px; margin-left: auto; padding-left: 2px; }
.side button { display: grid; place-items: center; width: 16px; height: 16px; }
.side svg { width: 13px; height: 13px; fill: none; stroke: #3c5b7a; stroke-width: 1.5; }
.side .d { stroke: #245f9e; stroke-width: 2.5; }
.side .f { fill: #bcd7ec; }
.side .g { stroke: #777; }
.side .b { stroke: #4a80bd; stroke-width: 1.2; }
.side .m { stroke: #3c73ad; stroke-width: 2; }
.side .s { fill: #4e85bd; stroke: #315f91; }
.hgrip { width: 14px; height: 4px; margin: 1px 0; border: 1px solid #bbb; border-left: 0; border-right: 0; background: #fff; }
.hgrip.again { margin: 6px 0 3px; }

.center { flex: 1; display: flex; flex-direction: column; min-width: 0; }
.view { flex: 1; display: flex; min-height: 0; }
.drawing { flex: 1; min-width: 0; width: 100%; height: auto; background: #000; fill: none; }
.ent { stroke: #d8d8d8; stroke-width: 1; }
.cross, .ucs { stroke: #b8b8b8; }
.axis { fill: #b8b8b8; font: 12px "Liberation Sans", sans-serif; }
.vscroll { display: flex; flex-direction: column; align-items: center; width: 12px; padding: 4px 0 2px; background: #f3f3f3; }
.thumb { background: #ccc; }
.vscroll .thumb { width: 11px; height: 12px; margin-top: 77px; }
.end { margin-top: auto; }
.tabs { display: flex; align-items: flex-start; height: 14px; padding-right: 12px; border-bottom: 1px solid #fff; }
.nav { display: grid; place-items: center; width: 14px; height: 12px; border-right: 1px solid #ccc; }
.nav svg { width: 8px; height: 8px; fill: #111; }
.tab { position: relative; height: 11px; padding: 0 5px; margin-right: -3px; line-height: 11px; }
.tab svg { position: absolute; inset: 0; width: 100%; height: 100%; fill: #f4f4f4; stroke: #333; }
.tab.on svg { fill: #000; stroke: #000; }
.tab.on { color: #fff; }
.tab span { position: relative; }
.hscroll { display: flex; align-items: center; width: 322px; height: 13px; margin-left: auto; }
.hscroll .split { width: 4px; height: 10px; margin-right: 4px; background: #ccc; }
.hscroll .end { margin: 0 0 0 auto; }

.command { display: flex; height: 46px; padding: 0 6px 0 4px; border-top: 1px solid #fff; }
.command::before { content: ""; position: absolute; left: 0; right: 0; height: 2px; margin-top: 1px; background: #999; }
.command > .grip { height: 35px; margin: 7px 3px 0 0; width: 5px; }
.cmdpanel { flex: 1; min-width: 0; margin-top: 5px; border: 1px solid #888; border-top-width: 2px; border-right-color: #ddd; border-bottom-color: #bbb; background: #fff; font: 10px/10px "Liberation Mono", "Noto Sans CJK SC", monospace; color: #333; }
.cmdpanel span { font-size: 11px; }
.history { display: flex; height: 25px; border-bottom: 1px solid #b8b8b8; }
.log { flex: 1; padding-left: 1px; }
.log p { height: 10px; }
.logscroll { display: flex; flex-direction: column; justify-content: space-around; align-items: center; width: 12px; background: #f3f3f3; }
.entry { display: flex; align-items: center; height: 12px; padding-left: 1px; }
.entry input { flex: 1; min-width: 0; height: 11px; padding: 0 2px; border: 0; outline: 0; background: none; font: inherit; }
.entryscroll { display: flex; align-items: center; justify-content: space-between; width: 60px; height: 12px; padding-right: 15px; background: #f0f0f0; }
.entryscroll .thumb { width: 24px; height: 10px; }

.status { display: flex; align-items: center; gap: 1px; height: 17px; padding: 1px 3px; }
.coords { width: 184px; height: 14px; padding-left: 1px; margin-right: 1px; border: 1px solid #aaa; border-right-color: #ccc; font: 7px/12px "DejaVu Sans Mono", monospace; }
.status button { height: 14px; padding: 0 1px; border: 1px solid transparent; border-right-color: #aaa; line-height: 13px; white-space: nowrap; }
.status button.on { border-color: #555 transparent transparent #555; background: #f7f7f7; }
.tray { display: flex; gap: 4px; margin-left: auto; }
.tray svg { width: 12px; height: 12px; }

.taskbar { display: flex; height: 29px; background: linear-gradient(90deg, #203a40, #1f3440 55%, #1b2c45); color: #fff; }
.start { display: grid; place-items: center; width: 35px; }
.start svg { width: 12px; height: 12px; }
.search { display: flex; align-items: center; gap: 8px; width: 251px; padding-left: 9px; background: #f3f3f3; }
.search svg { width: 12px; height: 12px; fill: none; stroke: #333; }
.search input { flex: 1; min-width: 0; padding: 0; border: 0; outline: 0; background: none; font: 10px/14px "Noto Sans CJK SC", sans-serif; }
.search input::placeholder { color: #555; opacity: 1; }
.apps { display: flex; }
.apps button { display: grid; place-items: center; width: 36px; border: solid transparent; border-width: 0 2px; }
.apps svg { width: 16px; height: 16px; }
.apps .run { box-shadow: inset 0 -2px #6fabdc; }
.apps .active { background: #465c68; background-clip: padding-box; }
.ps { fill: #a9c6ff; font: bold 8px "Liberation Sans", sans-serif; }
.systray { display: flex; align-items: flex-end; margin-left: auto; padding-right: 11px; }
.reddot { width: 7px; height: 4px; margin: 0 16px 8px 0; border-radius: 2px; background: #e33; }
.systray time { font-size: 9px; line-height: 14px; color: #e4e8ec; }
.notify { align-self: center; margin-left: 12px; }
.notify svg { width: 20px; height: 18px; }
.count { fill: #fff; font: bold 8px "Liberation Sans", sans-serif; }

.brand { position: absolute; right: 50px; bottom: 10px; display: flex; align-items: center; width: 194px; height: 97px; padding-left: 17px; background: #fff; }
.brandmark { width: 52px; height: 42px; }
.brandtext { display: flex; flex-direction: column; color: #111; white-space: nowrap; }
.brandtext strong { font: italic 900 21px/21px "Noto Sans CJK SC", sans-serif; }
.brandtext span { font: italic 600 14px/18px "Open Sans", sans-serif; }
```
